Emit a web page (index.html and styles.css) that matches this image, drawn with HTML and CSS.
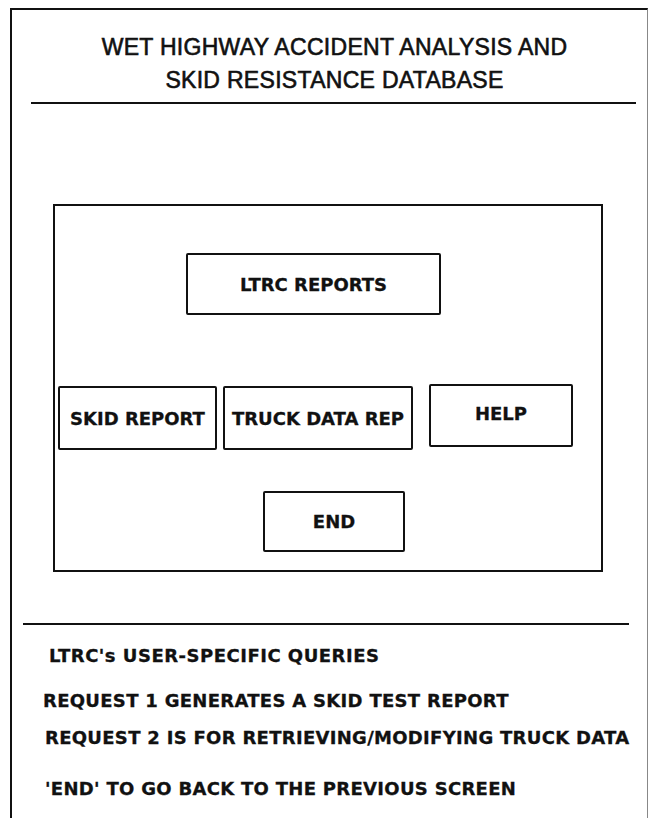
FILE: index.html
```html
<!DOCTYPE html>
<html lang="en">

<head>
  <meta charset="UTF-8">
  <meta name="viewport" content="width=device-width, initial-scale=1.0">
  <title>Wet Highway Accident Analysis and Skid Resistance Database</title>
  <link rel="stylesheet" href="styles.css">
</head>

<body>
  <div class="frame">
    <h1 class="title">WET HIGHWAY ACCIDENT ANALYSIS AND<br>SKID RESISTANCE DATABASE</h1>
    <div class="rule rule-top"></div>

    <div class="panel">
      <button class="btn btn-lead">LTRC REPORTS</button>
      <div class="btn-row">
        <button class="btn btn-skid">SKID REPORT</button>
        <button class="btn btn-truck">TRUCK DATA REP</button>
        <button class="btn btn-help">HELP</button>
      </div>
      <button class="btn btn-end">END</button>
    </div>

    <div class="rule rule-bottom"></div>

    <div class="notes">
      <p class="note note-head">LTRC's USER-SPECIFIC QUERIES</p>
      <p class="note note-1">REQUEST 1 GENERATES A SKID TEST REPORT</p>
      <p class="note note-2">REQUEST 2 IS FOR RETRIEVING/MODIFYING TRUCK DATA</p>
      <p class="note note-end">'END' TO GO BACK TO THE PREVIOUS SCREEN</p>
    </div>
  </div>
</body>

</html>
```

FILE: styles.css
```css
body {
  margin: 0;
  padding: 0;
  background-color: #fff;
  color: #111;
  font-family: "Liberation Sans", Arial, sans-serif;
}

.frame {
  box-sizing: border-box;
  margin: 8px 0 0 10px;
  width: 638px;
  min-height: calc(100vh - 8px);
  border-top: 2px solid #111;
  border-left: 2px solid #111;
  border-right: 1px solid #888;
}

.title {
  margin: 0;
  padding: 21px 0 0 10px;
  text-align: center;
  font-size: 23px;
  font-weight: normal;
  line-height: 33px;
  letter-spacing: 0.3px;
  -webkit-text-stroke: 0.6px #111;
}

.rule {
  height: 2px;
  background-color: #111;
}

.rule-top {
  margin: 5px 11px 0 19px;
}

.panel {
  box-sizing: border-box;
  width: 550px;
  height: 368px;
  margin: 100px 0 0 41px;
  padding: 47px 0 0 3px;
  border: 2px solid #111;
}

.btn {
  display: block;
  box-sizing: border-box;
  margin: 0;
  padding: 0;
  background-color: #fff;
  color: #111;
  border: 2px solid #111;
  border-radius: 2px;
  font-family: "DejaVu Sans", sans-serif;
  font-weight: bold;
  font-size: 18px;
  text-align: center;
  -webkit-text-stroke: 0.3px #111;
}

.btn-lead {
  width: 255px;
  height: 62px;
  margin-left: 128px;
}

.btn-row {
  display: flex;
  align-items: flex-start;
  margin-top: 71px;
}

.btn-skid {
  width: 159px;
  height: 64px;
}

.btn-truck {
  width: 190px;
  height: 64px;
  margin-left: 6px;
}

.btn-help {
  width: 144px;
  height: 63px;
  margin: -2px 0 0 16px;
  padding-bottom: 4px;
}

.btn-end {
  width: 142px;
  height: 61px;
  margin: 41px 0 0 205px;
}

.rule-bottom {
  margin: 51px 18px 0 11px;
}

.notes {
  padding-top: 20px;
}

.note {
  margin: 0;
  font-family: "DejaVu Sans", sans-serif;
  font-weight: bold;
  font-size: 18px;
  line-height: 22px;
  letter-spacing: 0.3px;
  -webkit-text-stroke: 0.3px #111;
}

.note-head {
  margin-left: 37px;
  letter-spacing: 0.5px;
}

.note-1 {
  margin: 23px 0 0 31px;
}

.note-2 {
  margin: 15px 0 0 33px;
}

.note-end {
  margin: 29px 0 0 33px;
}
```
